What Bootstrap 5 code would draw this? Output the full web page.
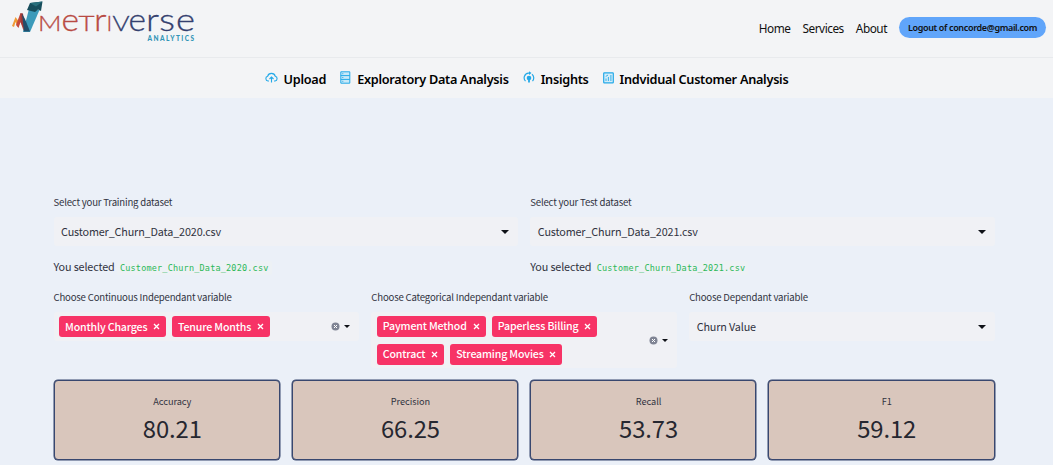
<!DOCTYPE html>
<html lang="en">
<head>
<meta charset="utf-8">
<meta name="viewport" content="width=device-width, initial-scale=1">
<title>Metriverse Analytics</title>
<link href="https://cdn.jsdelivr.net/npm/bootstrap@5.3.0/dist/css/bootstrap.min.css" rel="stylesheet">
<style>
body{background:#ebf0f8;font-family:"Noto Sans CJK SC","Noto Sans",sans-serif;color:#31333f;overflow:hidden;height:465px}
.topbar,.menubar{font-family:"Noto Sans","Open Sans",sans-serif;background:#f3f4f6;color:#111}
.topbar{height:58px;border-bottom:1px solid #e8eaed;padding-right:7px}
.toplinks{font-size:11.8px;gap:12px;line-height:20px;margin-top:17px;letter-spacing:-.46px}
.toplinks a,.menubar a{color:#111;text-decoration:none;white-space:nowrap}
.toplinks .logout{background:#60a5fa;border-radius:11px;width:147px;height:21px;font-size:9px;line-height:21px;font-weight:600;text-align:center;letter-spacing:-.35px}
.menubar{height:40px;font-size:12.7px;letter-spacing:-.27px;font-weight:600;padding-top:2px;gap:14px}
.menubar a{color:#000;display:flex;align-items:center;gap:6px}
.menubar svg{flex:none;margin-top:-2px}
.menubar span{padding-top:1px}
.dash{padding:97px 58.5px 0 53.5px}
.cols{display:grid;column-gap:12.5px}
.two{grid-template-columns:1fr 1fr}.three{grid-template-columns:repeat(3,1fr)}.four{grid-template-columns:repeat(4,1fr);column-gap:11.6px;margin-top:12px}
.lbl{font-size:9.6px;letter-spacing:-.19px;line-height:14px;margin-bottom:8px;white-space:nowrap}
.sel{background:#f0f1f5;border-radius:3px;min-height:29px;font-size:10.8px;letter-spacing:-.14px;line-height:27px;padding:0 9px 0 7.5px}
.sel>span:first-child{padding-bottom:1px}
.caret{width:0;height:0;border:4px solid transparent;border-top:4px solid #0e1117;border-bottom:0;flex:none}
.caret.sm{border-width:3.5px 3px 0}
.picked{font-size:10.8px;letter-spacing:-.14px;line-height:18px;margin:11px 0 13px}
.picked code{font-family:"DejaVu Sans Mono","Liberation Mono",monospace;font-size:8.5px;letter-spacing:.19px;color:#2bb858;background:#edf1f5;border-radius:2px;padding:2px 3px;margin-left:0}
.multi{padding:3.5px 9px 3.5px 5.5px}
.tags{display:flex;flex-wrap:wrap;gap:7px 6px;width:240px}
.tagx{background:#f73366;color:#fff;border-radius:3px;height:21px;line-height:20px;font-size:10.6px;letter-spacing:-.16px;padding:0 6px;display:flex;align-items:center;justify-content:space-between;white-space:nowrap;font-weight:500}
.metric{height:79.5px;background:#d9c6bc;border:1.5px solid #38476f;border-radius:4px;text-align:center;padding:13px 0 0 11px;box-shadow:0 0 0 .5px #38476f}
.metric div{font-size:9.2px;line-height:15px;letter-spacing:-.05px}
.metric p{font-size:23.8px;line-height:37px;margin:0;color:#262730;font-weight:400;letter-spacing:-.1px}
</style>
</head>
<body>
<header class="topbar d-flex justify-content-between align-items-start">
<svg width="200" height="50" viewBox="0 0 200 50" role="img" aria-label="Metriverse Analytics">
<path d="M12 26L15.500 17L20 23L18 27L15.500 22L14 27Z" fill="#f09a35"/>
<path d="M16 25L20.500 13L30 32H24L20.500 22L18.500 28Z" fill="#c64a3c"/>
<path d="M20.500 13L23 13.500L25 31L20.500 22Z" fill="#9e3838"/>
<path d="M23 32L29 9L39.500 10L30 32Z" fill="#3c9aba"/>
<path d="M22 13.500L25 19L30 31.500H24Z" fill="#214e6b"/>
<path d="M27 10L30 3L42.500 1.500L41 11L38 9.500L35 12Z" fill="#174d5c"/>
<path d="M30 3L42.500 1.500L36 6.500Z" fill="#276d7b"/>
<g font-family="Lato,sans-serif" font-weight="300" fill="#b84a43" stroke="#b84a43" stroke-width=".3">
<text x="38" y="31" font-size="22" textLength="23.500" lengthAdjust="spacingAndGlyphs">M</text>
<text x="61.500" y="31.300" font-size="32" textLength="17.500" lengthAdjust="spacingAndGlyphs">e</text>
<text x="78.500" y="31" font-size="22" textLength="16" lengthAdjust="spacingAndGlyphs">T</text>
<text x="94" y="31" font-size="31" textLength="12.500" lengthAdjust="spacingAndGlyphs">r</text>
<text x="106.500" y="31" font-size="22">I</text>
</g>
<g font-family="Lato,sans-serif" font-weight="300" fill="#34406f" stroke="#34406f" stroke-width=".3">
<text x="112.500" y="31" font-size="22" textLength="17" lengthAdjust="spacingAndGlyphs">V</text>
<text x="128.500" y="31.300" font-size="32" textLength="17.500" lengthAdjust="spacingAndGlyphs">e</text>
<text x="146" y="31" font-size="31" textLength="13" lengthAdjust="spacingAndGlyphs">r</text>
<text x="159" y="31.300" font-size="32" textLength="16" lengthAdjust="spacingAndGlyphs">s</text>
<text x="176" y="31.300" font-size="32" textLength="19" lengthAdjust="spacingAndGlyphs">e</text>
</g>
<text x="147.500" y="41" font-family="Lato,sans-serif" font-weight="900" font-size="6.500" fill="#3194b7" textLength="46.500">ANALYTICS</text>
</svg>
<nav class="toplinks d-flex align-items-center"><a href="#">Home</a><a href="#">Services</a><a href="#">About</a><a href="#" class="logout">Logout of concorde@gmail.com</a></nav>
</header>
<nav class="menubar d-flex justify-content-center align-items-center">
<a href="#"><svg width="13" height="13" viewBox="0 0 13 13" fill="none" stroke="#24a9e8" stroke-width="1.1"><path d="M4 10H3A2.4 2.4 0 0 1 2.600 5.300A4 4 0 0 1 10.300 5.300A2.400 2.400 0 0 1 10 10H9M6.500 11.500V6M4.500 8L6.500 6L8.500 8"/></svg><span>Upload</span></a>
<a href="#"><svg width="11" height="13" viewBox="0 0 11 13" fill="#c9e9f8" stroke="#24a9e8"><path d="M.8.8H9.800V12.200H.8ZM.8 4.600H9.800M.8 8.400H9.800M2.300 2.700H3.300M2.300 6.500H3.300M2.300 10.300H3.300"/></svg><span>Exploratory Data Analysis</span></a>
<a href="#"><svg width="12" height="13" viewBox="0 0 12 13" fill="none" stroke="#24a9e8" stroke-width="1.200"><path d="M2.500 10.200A4.800 4.800 0 0 1 5.500 2.100H7M9 3.300A4.800 4.800 0 0 1 9.500 10.200"/><path d="M6 .2L8.500 2.100L6 4Z" fill="#24a9e8" stroke="none"/><circle cx="6" cy="7" r="2.300" fill="#24a9e8" stroke="none"/><path d="M6 7V11.500" stroke-width="1.800"/></svg><span>Insights</span></a>
<a href="#"><svg width="11" height="12" viewBox="0 0 11 12" fill="#d4edf9" stroke="#24a9e8" stroke-width="1.200"><rect x=".7" y=".8" width="9.600" height="10" rx=".6"/><path d="M3 9V6.500M5.400 9V5M7.900 9V3M2.700 4.500L5 3" stroke-width=".9"/></svg><span>Indvidual Customer Analysis</span></a>
</nav>
<main class="dash">
<section class="cols two">
<div><div class="lbl">Select your Training dataset</div><div class="sel d-flex justify-content-between align-items-center"><span>Customer_Churn_Data_2020.csv</span><i class="caret"></i></div><div class="picked">You selected <code>Customer_Churn_Data_2020.csv</code></div></div>
<div><div class="lbl">Select your Test dataset</div><div class="sel d-flex justify-content-between align-items-center"><span>Customer_Churn_Data_2021.csv</span><i class="caret"></i></div><div class="picked">You selected <code>Customer_Churn_Data_2021.csv</code></div></div>
</section>
<section class="cols three align-items-start">
<div><div class="lbl">Choose Continuous Independant variable</div><div class="sel multi d-flex justify-content-between align-items-center"><div class="tags"><span class="tagx" style="width:107px">Monthly Charges <svg width="7" height="7" viewBox="0 0 7 7" stroke="#fff" stroke-width="1.300"><path d="M1 1L6 6M6 1L1 6"/></svg></span><span class="tagx" style="width:98px">Tenure Months <svg width="7" height="7" viewBox="0 0 7 7" stroke="#fff" stroke-width="1.300"><path d="M1 1L6 6M6 1L1 6"/></svg></span></div><span class="d-flex align-items-center gap-1"><svg width="9" height="9" viewBox="0 0 9 9"><circle cx="4.500" cy="4.500" r="4" fill="#7f8494"/><path d="M3 3L6 6M6 3L3 6" stroke="#fff"/></svg><i class="caret sm"></i></span></div></div>
<div><div class="lbl">Choose Categorical Independant variable</div><div class="sel multi d-flex justify-content-between align-items-center"><div class="tags"><span class="tagx" style="width:109px">Payment Method <svg width="7" height="7" viewBox="0 0 7 7" stroke="#fff" stroke-width="1.300"><path d="M1 1L6 6M6 1L1 6"/></svg></span><span class="tagx" style="width:105px">Paperless Billing <svg width="7" height="7" viewBox="0 0 7 7" stroke="#fff" stroke-width="1.300"><path d="M1 1L6 6M6 1L1 6"/></svg></span><span class="tagx" style="width:67.500px">Contract <svg width="7" height="7" viewBox="0 0 7 7" stroke="#fff" stroke-width="1.300"><path d="M1 1L6 6M6 1L1 6"/></svg></span><span class="tagx" style="width:112px">Streaming Movies <svg width="7" height="7" viewBox="0 0 7 7" stroke="#fff" stroke-width="1.300"><path d="M1 1L6 6M6 1L1 6"/></svg></span></div><span class="d-flex align-items-center gap-1"><svg width="9" height="9" viewBox="0 0 9 9"><circle cx="4.500" cy="4.500" r="4" fill="#7f8494"/><path d="M3 3L6 6M6 3L3 6" stroke="#fff"/></svg><i class="caret sm"></i></span></div></div>
<div><div class="lbl">Choose Dependant variable</div><div class="sel d-flex justify-content-between align-items-center"><span>Churn Value</span><i class="caret"></i></div></div>
</section>
<section class="cols four">
<div class="metric"><div>Accuracy</div><p>80.21</p></div>
<div class="metric"><div>Precision</div><p>66.25</p></div>
<div class="metric"><div>Recall</div><p>53.73</p></div>
<div class="metric"><div>F1</div><p>59.12</p></div>
</section>
</main>
<script src="https://cdn.jsdelivr.net/npm/bootstrap@5.3.0/dist/js/bootstrap.bundle.min.js"></script>
</body>
</html>
